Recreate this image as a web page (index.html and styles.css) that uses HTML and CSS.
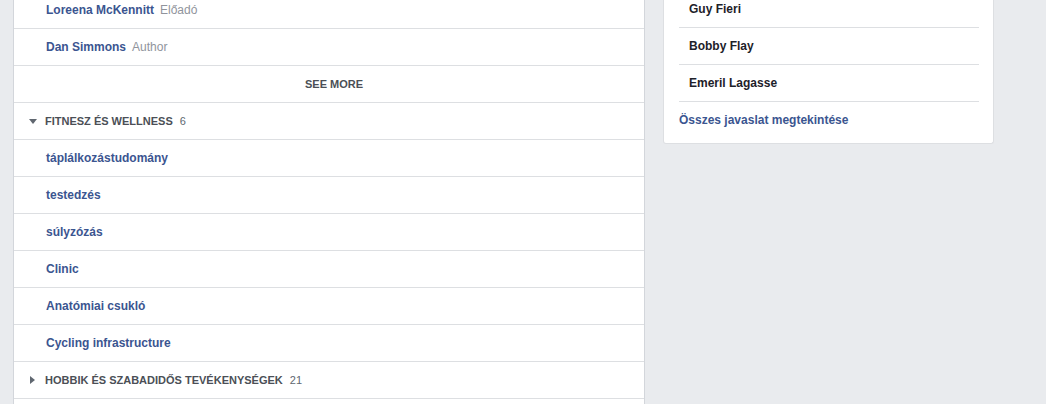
FILE: index.html
```html
<!DOCTYPE html>
<html lang="hu">
<head>
    <meta charset="UTF-8">
    <meta name="viewport" content="width=device-width, initial-scale=1.0">
    <title>Érdeklődési körök</title>
    <link rel="stylesheet" href="styles.css">
</head>
<body>
    <div class="page">
        <div class="interests">
            <div class="row item"><a class="name">Loreena McKennitt</a><span class="sub">Előadó</span></div>
            <div class="row item"><a class="name">Dan Simmons</a><span class="sub">Author</span></div>
            <div class="row see-more">SEE MORE</div>
            <div class="row section">
                <span class="arrow down"></span>
                <span class="title">Fitnesz és wellness</span>
                <span class="count">6</span>
            </div>
            <div class="row item"><a class="name">táplálkozástudomány</a></div>
            <div class="row item"><a class="name">testedzés</a></div>
            <div class="row item"><a class="name">súlyzózás</a></div>
            <div class="row item"><a class="name">Clinic</a></div>
            <div class="row item"><a class="name">Anatómiai csukló</a></div>
            <div class="row item"><a class="name">Cycling infrastructure</a></div>
            <div class="row section">
                <span class="arrow right"></span>
                <span class="title">Hobbik és szabadidős tevékenységek</span>
                <span class="count">21</span>
            </div>
            <div class="row item"></div>
        </div>

        <div class="suggestions">
            <div class="suggestion">Guy Fieri</div>
            <div class="suggestion">Bobby Flay</div>
            <div class="suggestion">Emeril Lagasse</div>
            <a class="all-link">Összes javaslat megtekintése</a>
        </div>
    </div>
</body>
</html>
```

FILE: styles.css
```css
body {
    margin: 0;
    background-color: #e9ebee;
    font-family: "Liberation Sans", Arial, sans-serif;
    font-size: 12px;
    overflow: hidden;
}
.page {
    display: flex;
    align-items: flex-start;
    margin-top: -8px;
}
.interests {
    margin-left: 13px;
    width: 630px;
    background-color: #fff;
    border-left: 1px solid #d3d6db;
    border-right: 1px solid #d3d6db;
}
.row {
    height: 36px;
    line-height: 36px;
    border-bottom: 1px solid #dddfe2;
    white-space: nowrap;
}
.item {
    padding-left: 32px;
}
.name {
    color: #3b5590;
    font-weight: bold;
}
.sub {
    color: #90949c;
    margin-left: 6px;
}
.see-more {
    text-align: center;
    padding-left: 10px;
    font-size: 11px;
    font-weight: bold;
    color: #4b4f56;
}
.section {
    display: flex;
    align-items: center;
    padding-left: 15px;
    font-size: 11px;
    color: #4b4f56;
}
.title {
    font-weight: bold;
    text-transform: uppercase;
}
.count {
    margin-left: 7px;
    color: #606770;
}
.arrow {
    width: 0;
    height: 0;
    margin-right: 8px;
}
.arrow.down {
    border-left: 4px solid transparent;
    border-right: 4px solid transparent;
    border-top: 5px solid #606770;
}
.arrow.right {
    margin-left: 1px;
    margin-right: 10px;
    border-top: 4px solid transparent;
    border-bottom: 4px solid transparent;
    border-left: 5px solid #606770;
}
.suggestions {
    margin-left: 18px;
    margin-top: -1px;
    width: 300px;
    padding: 0 14px 0 15px;
    background-color: #fff;
    border: 1px solid #dddfe2;
    border-top: none;
    border-radius: 0 0 3px 3px;
}
.suggestion {
    height: 36px;
    line-height: 36px;
    padding-left: 10px;
    border-bottom: 1px solid #dddfe2;
    font-weight: bold;
    color: #1d2129;
}
.all-link {
    display: block;
    height: 36px;
    line-height: 36px;
    color: #3b5590;
    font-weight: bold;
    padding-bottom: 5px;
}
```
